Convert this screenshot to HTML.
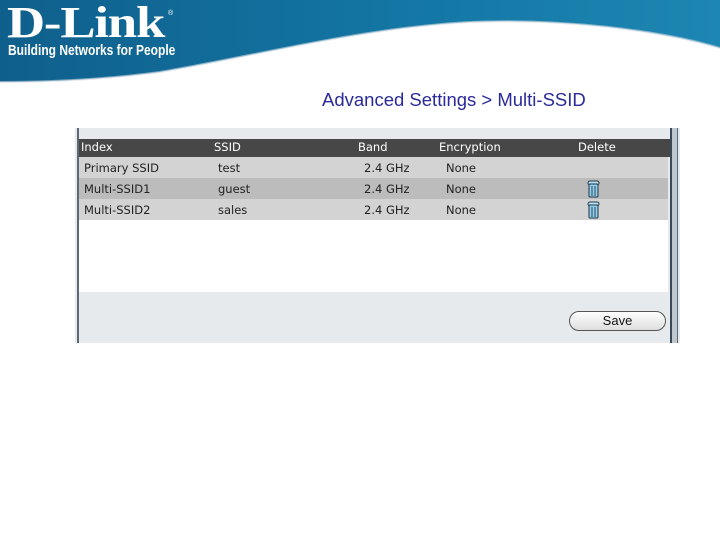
<!DOCTYPE html>
<html><head><meta charset="utf-8"><style>
body{margin:0;width:720px;height:540px;background:#fff;position:relative;overflow:hidden;font-family:"DejaVu Sans","Liberation Sans",sans-serif}
.a{position:absolute}
.t{position:absolute;font-size:11.5px;color:#222;white-space:nowrap}
.h{color:#fff}
</style></head><body>
<svg class="a" style="left:0;top:0" width="720" height="90">
<defs><linearGradient id="g" x1="0" y1="0" x2="1" y2="0"><stop offset="0" stop-color="#0f5f8c"/><stop offset="0.6" stop-color="#1478a6"/><stop offset="1" stop-color="#1e86b2"/></linearGradient></defs>
<path d="M0 0H720V48C660 30 560 18 470 22C360 28 260 55 160 72C100 80 40 82 0 82Z" fill="url(#g)"/>
<path d="M0 82C40 82 100 80 160 72C260 55 360 28 470 22C560 18 660 30 720 48" fill="none" stroke="#cfdbe3" stroke-width="2" opacity="0.6"/>
</svg>
<div class="a" style="left:7px;top:-3px;font:bold 44px 'Liberation Serif',serif;color:#fff;letter-spacing:-1px;transform:scaleX(1.2);transform-origin:left">D-Link</div>
<div class="a" style="left:168px;top:10px;font:7px 'Liberation Sans';color:#fff">®</div>
<div class="a" style="left:8px;top:42px;font:bold 15px 'Liberation Sans',sans-serif;color:#fff;transform:scaleX(0.8);transform-origin:left">Building Networks for People</div>
<div class="a" style="left:322px;top:89px;font:18.5px 'Liberation Sans',sans-serif;color:#2a2a9a">Advanced Settings &gt; Multi-SSID</div>

<div class="a" style="left:75px;top:128px;width:605px;height:215px;background:#e6eaec"></div>
<div class="a" style="left:77px;top:128px;width:2px;height:215px;background:#5a6a78"></div>
<div class="a" style="left:670px;top:128px;width:2px;height:215px;background:#3a4a5a"></div>
<div class="a" style="left:672px;top:128px;width:5px;height:215px;background:#c0c8cf"></div>
<div class="a" style="left:677px;top:128px;width:1px;height:215px;background:#5a6a78"></div>
<div class="a" style="left:79px;top:139px;width:591px;height:18px;background:#474747"></div>
<div class="a" style="left:79px;top:157px;width:589px;height:21px;background:#d3d3d3"></div>
<div class="a" style="left:79px;top:178px;width:589px;height:21px;background:#bcbcbc"></div>
<div class="a" style="left:79px;top:199px;width:589px;height:21px;background:#d3d3d3"></div>
<div class="a" style="left:79px;top:220px;width:589px;height:72px;background:#fff"></div>

<div class="t h" style="left:81px;top:140px">Index</div>
<div class="t h" style="left:214px;top:140px">SSID</div>
<div class="t h" style="left:358px;top:140px">Band</div>
<div class="t h" style="left:439px;top:140px">Encryption</div>
<div class="t h" style="left:578px;top:140px">Delete</div>

<div class="t" style="left:84px;top:161px">Primary SSID</div>
<div class="t" style="left:218px;top:161px">test</div>
<div class="t" style="left:364px;top:161px">2.4 GHz</div>
<div class="t" style="left:446px;top:161px">None</div>
<div class="t" style="left:84px;top:182px">Multi-SSID1</div>
<div class="t" style="left:218px;top:182px">guest</div>
<div class="t" style="left:364px;top:182px">2.4 GHz</div>
<div class="t" style="left:446px;top:182px">None</div>
<div class="t" style="left:84px;top:203px">Multi-SSID2</div>
<div class="t" style="left:218px;top:203px">sales</div>
<div class="t" style="left:364px;top:203px">2.4 GHz</div>
<div class="t" style="left:446px;top:203px">None</div>

<svg class="a" style="left:586px;top:180px" width="16" height="40">
<g><rect x="2" y="1" width="11" height="4" rx="2" fill="#b5e2f4" stroke="#234" stroke-width="1"/><rect x="3" y="4" width="9" height="13" rx="1" fill="#8fd0ec" stroke="#234" stroke-width="1"/><line x1="6" y1="6" x2="6" y2="16" stroke="#345"/><line x1="9" y1="6" x2="9" y2="16" stroke="#345"/></g>
<g transform="translate(0,21)"><rect x="2" y="1" width="11" height="4" rx="2" fill="#b5e2f4" stroke="#234" stroke-width="1"/><rect x="3" y="4" width="9" height="13" rx="1" fill="#8fd0ec" stroke="#234" stroke-width="1"/><line x1="6" y1="6" x2="6" y2="16" stroke="#345"/><line x1="9" y1="6" x2="9" y2="16" stroke="#345"/></g>
</svg>

<div class="a" style="left:569px;top:311px;width:95px;height:18px;border:1px solid #555;border-radius:10px;background:linear-gradient(#fff,#ddd);font:13px 'Liberation Sans',sans-serif;color:#111;text-align:center;line-height:18px">Save</div>
</body></html>
